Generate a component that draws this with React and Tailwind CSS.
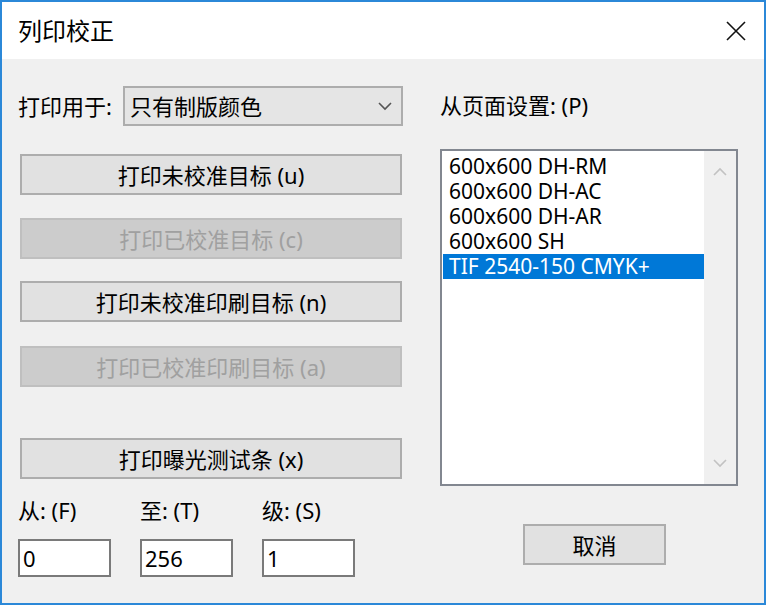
import React from "react";

const FONT = { fontFamily: '"Noto Sans", "Noto Sans CJK SC", sans-serif' };

function Chevron({ up = false, className = "" }) {
  return (
    <svg width="16" height="10" viewBox="0 0 16 10" className={className}>
      <path
        d={up ? "M2 8 L8 2 L14 8" : "M2 2 L8 8 L14 2"}
        fill="none"
        stroke="currentColor"
        strokeWidth="1.6"
      />
    </svg>
  );
}

function Button({ children, disabled, className = "" }) {
  return (
    <div
      className={
        "h-[41px] flex items-center justify-center border-2 text-[22px] leading-none " +
        (disabled
          ? "bg-[#cccccc] border-[#bfbfbf] text-[#a0a0a0] "
          : "bg-[#e1e1e1] border-[#adadad] text-black ") +
        className
      }
    >
      {children}
    </div>
  );
}

function NumField({ label, value }) {
  return (
    <div className="flex flex-col">
      <div className="text-[22px] leading-none h-[24px] text-black">{label}</div>
      <div className="mt-[16px] w-[93px] h-[38px] bg-white border-2 border-[#7a7a7a] flex items-center pl-[3px] text-[22px] leading-none text-black">
        {value}
      </div>
    </div>
  );
}

export default function App() {
  const items = [
    "600x600 DH-RM",
    "600x600 DH-AC",
    "600x600 DH-AR",
    "600x600 SH",
    "TIF 2540-150 CMYK+",
  ];

  return (
    <div className="w-[768px] h-[605px] bg-white" style={FONT}>
      <div className="w-[766px] h-[605px] border-2 border-[#2b88d8] flex flex-col">
        {/* title bar */}
        <div className="h-[57px] bg-white flex items-center justify-between pl-[16px] pr-[18px]">
          <span className="text-[24px] text-black leading-none">列印校正</span>
          <svg width="20" height="20" viewBox="0 0 20 20">
            <path d="M1 1 L19 19 M19 1 L1 19" stroke="#111" strokeWidth="1.6" />
          </svg>
        </div>

        {/* body */}
        <div className="flex-1 bg-[#f0f0f0] flex pl-[16px]">
          {/* left column */}
          <div className="w-[385px] flex flex-col">
            <div className="mt-[27px] flex items-center h-[40px]">
              <span className="text-[22px] leading-none text-black w-[105px]">打印用于:</span>
              <div className="flex-1 h-[40px] bg-[#e5e5e5] border-2 border-[#adadad] flex items-center justify-between pl-[5px] pr-[8px]">
                <span className="text-[22px] leading-none text-black">只有制版颜色</span>
                <Chevron className="text-[#555]" />
              </div>
            </div>

            <div className="ml-[2px] w-[382px] flex flex-col">
              <Button className="mt-[28px]">打印未校准目标 (u)</Button>
              <Button disabled className="mt-[23px]">打印已校准目标 (c)</Button>
              <Button className="mt-[22px]">打印未校准印刷目标 (n)</Button>
              <Button disabled className="mt-[24px]">打印已校准印刷目标 (a)</Button>
              <Button className="mt-[51px]">打印曝光测试条 (x)</Button>
            </div>

            <div className="mt-[20px] flex gap-[29px]">
              <NumField label="从: (F)" value="0" />
              <NumField label="至: (T)" value="256" />
              <NumField label="级: (S)" value="1" />
            </div>
          </div>

          {/* right column */}
          <div className="ml-[37px] w-[298px] flex flex-col">
            <div className="mt-[35px] text-[22px] leading-none text-black">从页面设置: (P)</div>
            <div className="mt-[33px] h-[337px] bg-white border-2 border-[#828790] flex">
              <div className="flex-1 pt-[3px] pl-[1px]">
                {items.map((it, i) => (
                  <div
                    key={it}
                    className={
                      "h-[25px] flex items-center pl-[6px] text-[21px] leading-none " +
                      (i === items.length - 1 ? "bg-[#0078d7] text-white" : "text-black")
                    }
                  >
                    {it}
                  </div>
                ))}
              </div>
              <div className="w-[32px] bg-[#f0f0f0] flex flex-col items-center justify-between py-[16px]">
                <Chevron up className="text-[#c2c2c2]" />
                <Chevron className="text-[#c2c2c2]" />
              </div>
            </div>
            <div className="mt-[38px] ml-[83px] w-[143px] h-[41px] bg-[#e1e1e1] border-2 border-[#adadad] flex items-center justify-center text-[22px] leading-none text-black">
              取消
            </div>
          </div>
        </div>
      </div>
    </div>
  );
}
